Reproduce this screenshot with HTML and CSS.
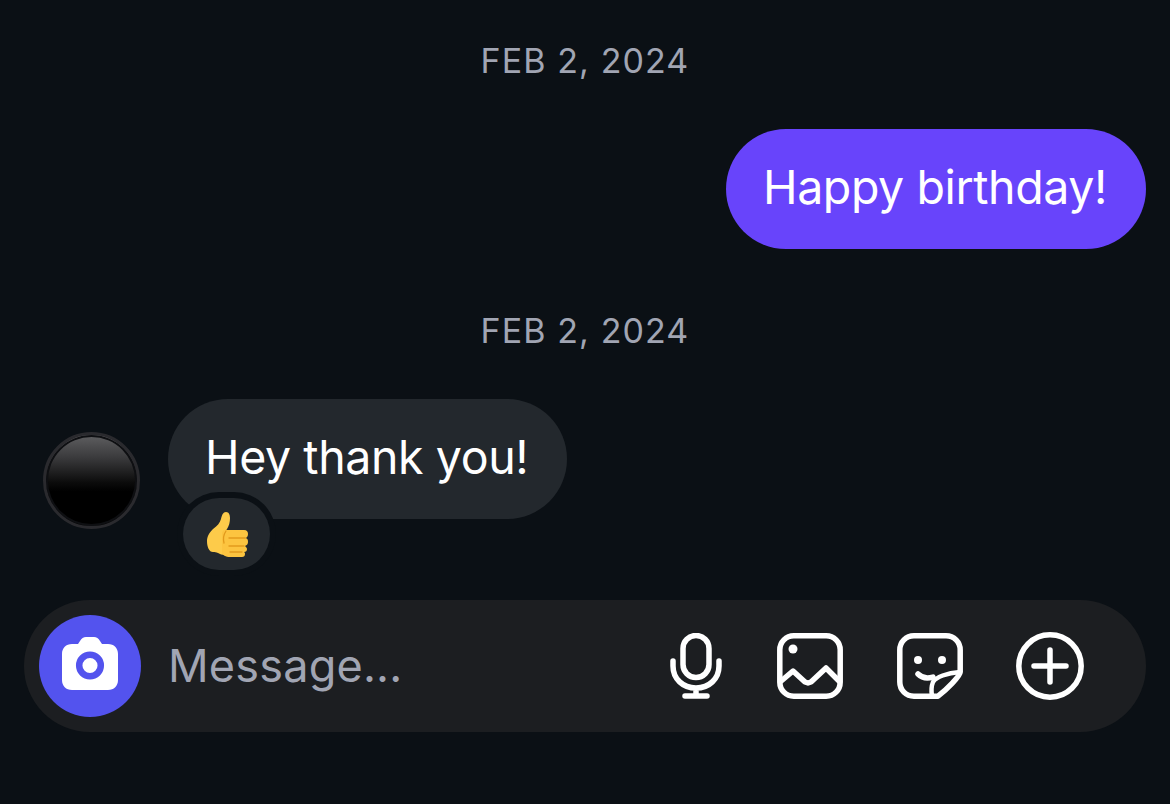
FILE: index.html
```html
<!DOCTYPE html>
<html lang="en">
<head>
<meta charset="utf-8">
<title>Chat</title>
<link rel="stylesheet" href="styles.css">
</head>
<body>
<main class="chat">
  <div class="date date-first">FEB 2, 2024</div>
  <div class="row row-out"><div class="bubble bubble-out">Happy birthday!</div></div>
  <div class="date date-second">FEB 2, 2024</div>
  <div class="row row-in">
    <div class="avatar"></div>
    <div class="bubble bubble-in">Hey thank you!
      <div class="reaction">
        <svg class="thumb" width="42" height="45" viewBox="0 0 42 45">
          <path d="M1 29c0-5 3-9 6-12 4-3 7-6 8-10 1-4 2-7 5-7 3 0 4 3 4 6 0 4-1 8-3 11l-2 3v23c-3 0-5-1-7-2-2-1-3-1-5-1-4 0-6-5-6-11z" fill="#fdcb4a"/>
          <path d="M16 21c0-2 2-3 4-3h18c3 0 4 2 4 4s-1 4-3 4c2 0 3 1 3 4 0 2-1 3-3 4 1 1 2 2 2 3 0 2-1 3-3 3 1 1 1 1 1 2 0 2-1 3-3 3H24c-4 0-8-2-8-5z" fill="#fcc440"/>
          <path d="M23 26h16M23 34h15M24 40h12M20 19c-2 3-3 8-2 12" stroke="#e29a1c" stroke-width="1.300" fill="none" stroke-linecap="round"/>
        </svg>
      </div>
    </div>
  </div>
  <div class="composer">
    <div class="camera">
      <svg class="camera-icon" width="56" height="53" viewBox="0 0 56 53">
        <path d="M10 7h6l2-3c1.500-2.500 3.500-4 6-4h8c2.500 0 4.500 1.500 6 4l2 3h6c6 0 10 4 10 10v26c0 6-4 10-10 10H10C4 53 0 49 0 43V17C0 11 4 7 10 7z" fill="#fff"/>
        <circle cx="28" cy="28.500" r="10.800" fill="#fff" stroke="#5353ee" stroke-width="6.500"/>
      </svg>
    </div>
    <div class="placeholder">Message...</div>
    <div class="tools">
      <svg class="tool-mic" width="52" height="66" viewBox="0 0 52 66" fill="none" stroke="#fff" stroke-width="5.500" stroke-linecap="round">
        <rect x="13" y="2.500" width="26" height="42" rx="13"/>
        <path d="M3 28v5c0 13 10 22 23 22s23-9 23-22v-5M26 55v8M15 63h22"/>
      </svg>
      <svg class="tool-image" width="66" height="66" viewBox="0 0 66 66" fill="none" stroke="#fff" stroke-width="5.500" stroke-linejoin="round">
        <rect x="2.800" y="2.800" width="60.400" height="60.400" rx="14"/>
        <circle cx="16" cy="16" r="4.500" fill="#fff" stroke="none"/>
        <path d="M3 49l13-11 12 11 3 1 3-1 15-14 14 14"/>
      </svg>
      <svg class="tool-sticker" width="66" height="66" viewBox="0 0 66 66" fill="none" stroke="#fff" stroke-width="5.500" stroke-linecap="round" stroke-linejoin="round">
        <path d="M41 63.200H17C9 63.200 2.800 57 2.800 49V17C2.800 9 9 2.800 17 2.800h32c8 0 14.200 6.200 14.200 14.200v22C63.200 43 49 57 41 63.200z"/>
        <path d="M35 63c-1-6-1-9 1-14 3-5 14-9 27-10" stroke-width="4.500"/>
        <path d="M21 41c4 4 9 5 15 3"/>
        <circle cx="21" cy="27" r="4" fill="#fff" stroke="none"/>
        <circle cx="45" cy="27" r="4" fill="#fff" stroke="none"/>
      </svg>
      <svg class="tool-plus" width="68" height="68" viewBox="0 0 68 68" fill="none" stroke="#fff" stroke-width="5.500" stroke-linecap="round">
        <circle cx="34" cy="34" r="31.200"/>
        <path d="M34 18v32M18 34h32"/>
      </svg>
    </div>
  </div>
</main>
</body>
</html>
```
FILE: styles.css
```css
html, body {
  margin: 0;
  height: 100%;
  background: #0b1015;
}

.chat {
  display: flex;
  flex-direction: column;
  height: 804px;
  overflow: hidden;
  padding: 0 24px;
  box-sizing: border-box;
  font-family: Inter, "Liberation Sans", sans-serif;
  color: #fff;
}

.date {
  height: 42px;
  line-height: 42px;
  text-align: center;
  font-size: 34px;
  letter-spacing: 1.1px;
  color: #a1a5b3;
}

.date-first { margin-top: 40px; }
.date-second { margin-top: 61px; }

.row { display: flex; align-items: center; }
.row-out { justify-content: flex-end; margin-top: 47px; }
.row-in { margin-top: 47px; padding-left: 19px; align-items: flex-start; }

.bubble {
  height: 120px;
  line-height: 116px;
  border-radius: 60px;
  font-size: 46.500px;
  letter-spacing: -0.4px;
  white-space: nowrap;
  box-sizing: border-box;
}

.bubble-out {
  width: 420px;
  padding-left: 37px;
  background: #6844fb;
}

.bubble-in {
  position: relative;
  width: 399px;
  margin-left: 28px;
  padding-left: 37px;
  background: #23282d;
}

.avatar {
  width: 97px;
  height: 97px;
  margin-top: 33px;
  box-sizing: border-box;
  border: 3px solid #2a2a2e;
  border-radius: 50%;
  background: linear-gradient(#5e5e60 0%, #3a3a3c 25%, #0c0c0c 52%, #000 62%, #000 100%);
  box-shadow: inset 0 0 0 2px #0e0f12;
}

.reaction {
  position: absolute;
  left: 15px;
  top: 99px;
  width: 87px;
  height: 72px;
  display: flex;
  align-items: center;
  justify-content: center;
  border-radius: 36px;
  background: #23282d;
  box-shadow: 0 0 0 6px #0b1015;
}

.composer {
  display: flex;
  align-items: center;
  height: 132px;
  margin-top: 71px;
  padding: 0 62px 0 15px;
  border-radius: 66px;
  background: #1c1e21;
}

.camera {
  flex: none;
  display: flex;
  align-items: center;
  justify-content: center;
  width: 102px;
  height: 102px;
  border-radius: 50%;
  background: #5353ee;
}

.camera-icon { margin-bottom: 6px; }

.placeholder {
  flex: 1;
  margin-left: 27px;
  padding-bottom: 2px;
  font-size: 45px;
  letter-spacing: 0.2px;
  color: #a1a5b3;
}

.tools {
  display: flex;
  align-items: center;
  gap: 54px;
}

.tools svg { display: block; }
.tool-mic { margin-right: 1px; }
.tool-plus { margin-left: -1px; }
```
